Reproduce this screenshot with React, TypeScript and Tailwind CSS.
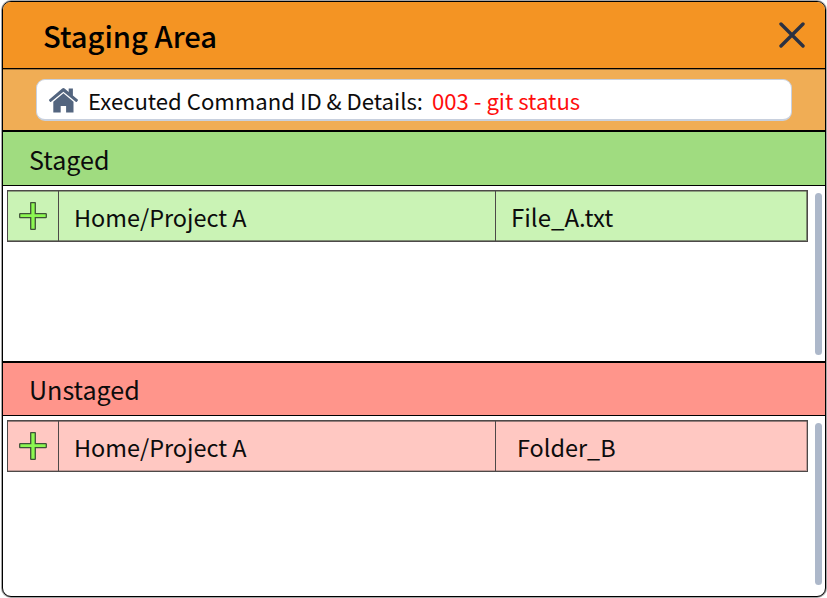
import React from "react";

function Plus() {
  return (
    <svg width="28" height="28" viewBox="0 0 28 28" className="block">
      <path
        d="M12.2 0.6h3.6q.5 0 .5.5v10.6h10.4q.6 0 .6.6v2.8q0 .6-.6.6H16.3v11.1q0 .6-.5.6h-3.6q-.5 0-.5-.6V15.7H1.3q-.6 0-.6-.6v-2.8q0-.6.6-.6h10.4V1.1q0-.5.5-.5z"
        fill="#8cf850"
        stroke="#3f5238"
        strokeWidth="1.3"
      />
    </svg>
  );
}

interface SectionProps {
  title: string;
  headClass: string;
  rowClass: string;
  bodyClass: string;
  file: string;
  fileClass: string;
}

function Section({ title, headClass, rowClass, bodyClass, file, fileClass }: SectionProps) {
  return (
    <section>
      <h2 className={`flex items-center border-b border-black pl-[26px] pt-[2px] text-[25.1px] ${headClass}`}>
        <span>{title}</span>
      </h2>
      <div className={`flex justify-between pl-1 pr-[3px] ${bodyClass}`}>
        <div className={`mt-1 flex h-[52px] w-[801px] border border-[#4d4948] text-[23.45px] ${rowClass}`}>
          <div className="flex w-[51px] items-center justify-center border-r border-[#4d4948]">
            <Plus />
          </div>
          <div className="flex w-[437px] items-center border-r border-[#4d4948] pl-[15px] pt-[3px]">
            <span>Home/Project A</span>
          </div>
          <div className={`flex items-center ${fileClass}`}>
            <span>{file}</span>
          </div>
        </div>
        <div className="mt-[7px] h-[162px] w-[7px] rounded-full bg-[#adb8ca]" />
      </div>
    </section>
  );
}

export default function App() {
  return (
    <div className="h-[598px] w-[827px] bg-white pl-[2px] pt-[1px] font-['Noto_Sans_CJK_SC','Noto_Sans',sans-serif] leading-none text-[#0c0c0c]">
      <div className="h-[596px] w-[824px] overflow-hidden rounded-[9px] border border-black bg-white shadow-[0_0_0_1px_rgba(0,0,0,0.35)]">
        <header className="flex h-[67px] items-center justify-between border-b border-black bg-[#f49423] pl-10 pr-5">
          <h1 className="pt-px text-[29.2px] font-medium text-black">Staging Area</h1>
          <svg width="26" height="26" viewBox="0 0 26 26">
            <path d="M2 2L24 24M24 2L2 24" stroke="#2b3142" strokeWidth="3.4" strokeLinecap="round" />
          </svg>
        </header>
        <div className="h-[63px] border-b-2 border-black bg-[#f0ad55] pl-[33px] pt-[10px] shadow-[inset_0_1px_0_rgba(0,0,0,0.3)]">
          <div className="flex h-[42px] w-[756px] items-center rounded-[9px] border border-b-2 border-[#c8d0de] bg-white pl-3 text-[22.13px]">
            <svg width="29" height="25" viewBox="0 0 29 25" className="mr-[10px] mt-px shrink-0" fill="#53657f">
              <path d="M13.2.5q1.2-.9 2.4 0l4.1 3.4V.6h4.2v6.8l4.8 4q.6.6.1 1.2l-.9 1.2q-.6.5-1.2 0L14.4 3.7 2.1 13.8q-.6.5-1.1 0L.1 12.6q-.4-.6.2-1.2z" />
              <path d="M14.4 5.3l10.1 8.4v10.7h-7.4v-6.5h-5.4v6.5H4.3V13.7z" />
            </svg>
            <span className="pt-px">Executed Command ID &amp; Details:</span>
            <span className="ml-[9px] pt-px text-[#ff0d0d]">003 - git status</span>
          </div>
        </div>
        <Section
          title="Staged"
          headClass="h-[54px] bg-[#a0dc80]"
          rowClass="bg-[#caf3b5] shadow-[inset_0_1px_0_rgba(77,73,72,0.5),inset_-1px_-1px_0_rgba(77,73,72,0.6)]"
          bodyClass="h-[177px] border-b-2 border-black"
          file="File_A.txt"
          fileClass="pl-[15px] pt-[2px] text-[24px]"
        />
        <Section
          title="Unstaged"
          headClass="h-[53px] bg-[#ff958b]"
          rowClass="bg-[#ffc8c2] shadow-[inset_0_1px_0_rgba(77,73,72,0.6),inset_-1px_-1px_0_rgba(77,73,72,0.35)]"
          bodyClass="h-[178px]"
          file="Folder_B"
          fileClass="pl-[21px] pt-[3px]"
        />
      </div>
    </div>
  );
}
